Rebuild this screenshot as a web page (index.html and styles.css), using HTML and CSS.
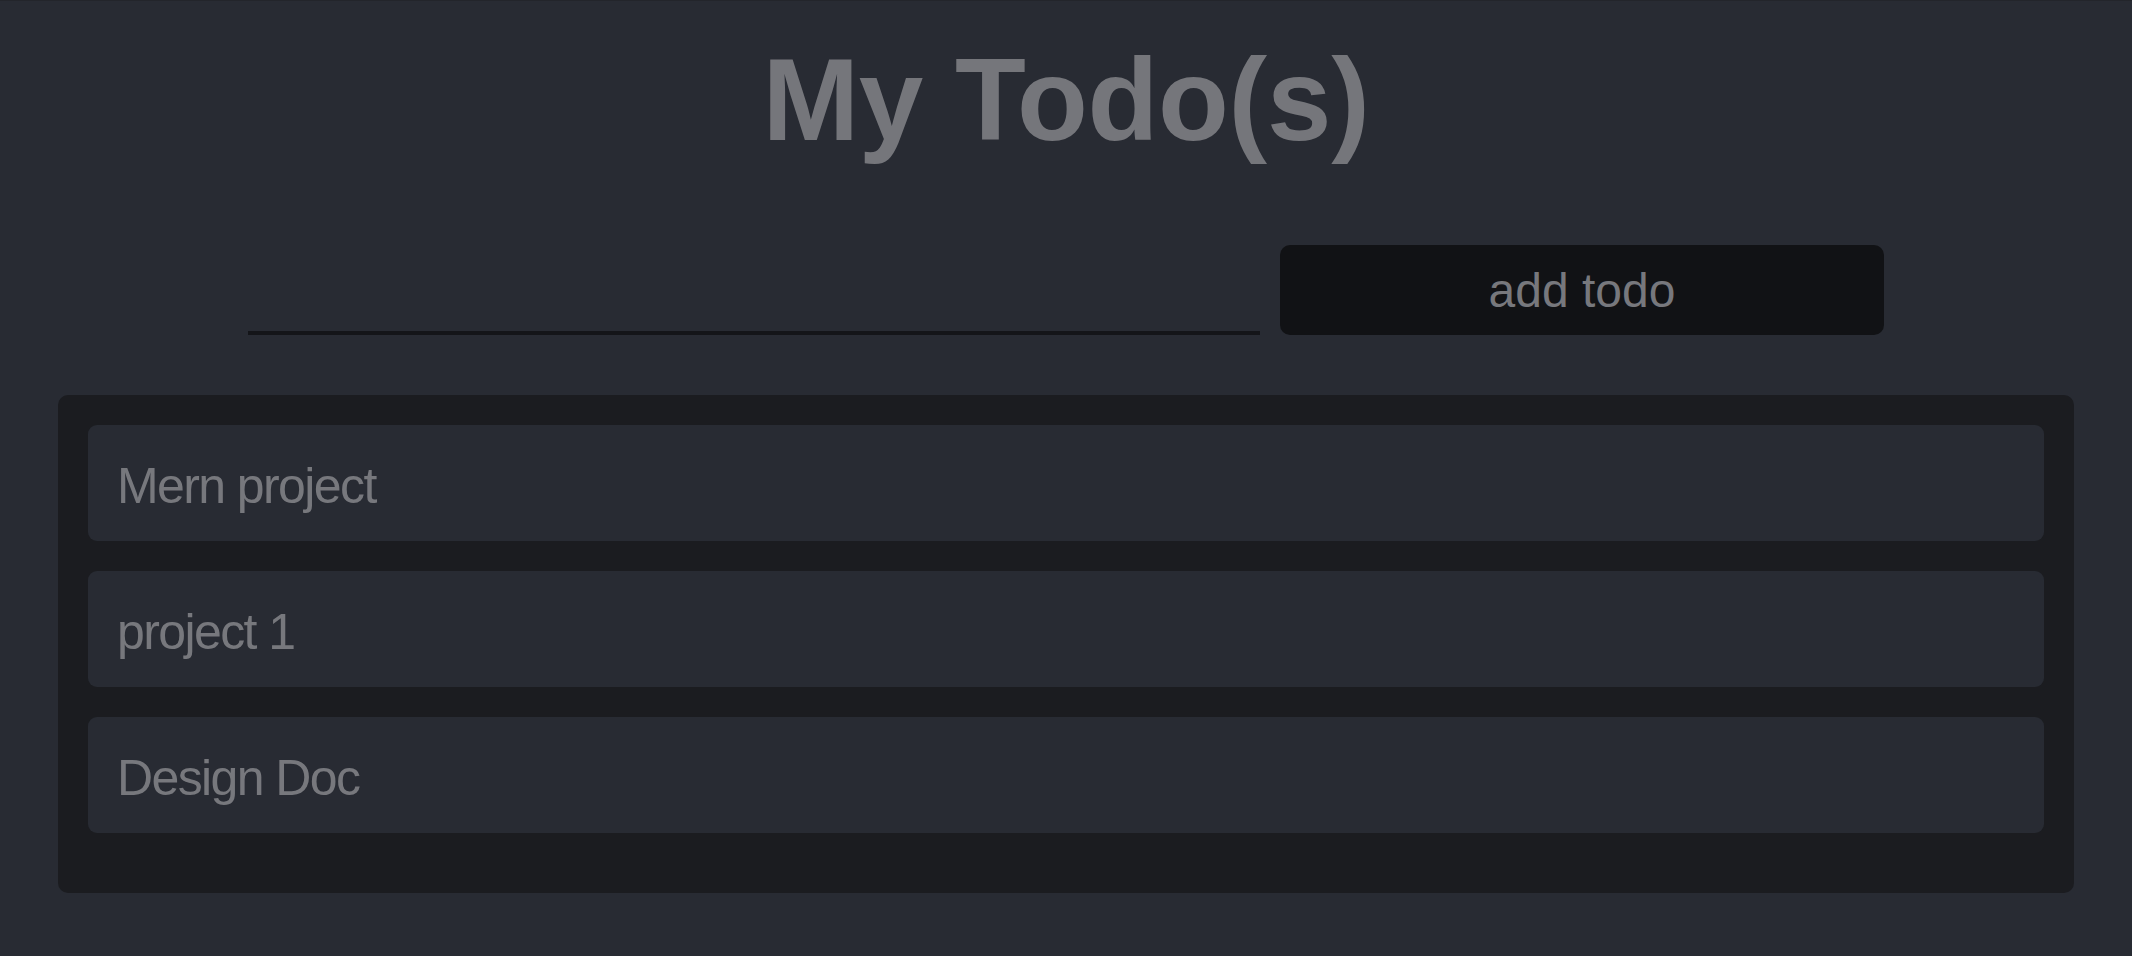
FILE: index.html
```html
<!DOCTYPE html>
<html lang="en">
<head>
<meta charset="utf-8">
<title>My Todo(s)</title>
<link rel="stylesheet" href="styles.css">
</head>
<body>
<div class="app">
  <h1 class="title">My Todo(s)</h1>
  <form class="add-form">
    <input class="add-input" type="text" aria-label="new todo">
    <button class="add-btn" type="button">add todo</button>
  </form>
  <ul class="todo-list">
    <li class="todo-item">Mern project</li>
    <li class="todo-item">project 1</li>
    <li class="todo-item">Design Doc</li>
  </ul>
</div>
</body>
</html>
```
FILE: styles.css
```css
html, body {
  margin: 0;
  padding: 0;
  background: #282b33;
  height: 100%;
}
body {
  border-top: 1px solid #23252b;
  box-sizing: border-box;
  font-family: "Liberation Sans", Arial, sans-serif;
  color: #77787d;
}
.app {
  padding: 41px 58px 0;
  display: flex;
  flex-direction: column;
}
.title {
  margin: 0;
  font-size: 116px;
  line-height: 116px;
  font-weight: 700;
  letter-spacing: -0.3px;
  text-align: center;
  color: #75767b;
}
.add-form {
  margin: 87px 0 0;
  padding: 0 190px;
  display: flex;
  gap: 20px;
  height: 90px;
}
.add-input {
  flex: 1;
  min-width: 0;
  background: transparent;
  border: none;
  border-bottom: 4px solid #141519;
  outline: none;
  margin: 0;
  padding: 0;
  color: #77787d;
  font: inherit;
  font-size: 48px;
}
.add-btn {
  width: 604px;
  flex: none;
  background: #111215;
  border: none;
  border-radius: 10px;
  color: #77787d;
  font-family: "Liberation Sans", Arial, sans-serif;
  font-size: 48px;
  line-height: 48px;
  padding: 2px 0 0;
}
.todo-list {
  list-style: none;
  margin: 60px 0 0;
  padding: 30px 30px 60px;
  background: #1b1c20;
  border-radius: 10px;
  display: flex;
  flex-direction: column;
  gap: 30px;
}
.todo-item {
  height: 116px;
  box-sizing: border-box;
  padding: 5px 29px 0;
  background: #282b33;
  border-radius: 9px;
  display: flex;
  align-items: center;
  font-size: 50px;
  line-height: 50px;
  letter-spacing: -1.6px;
  color: #77787d;
}
```
